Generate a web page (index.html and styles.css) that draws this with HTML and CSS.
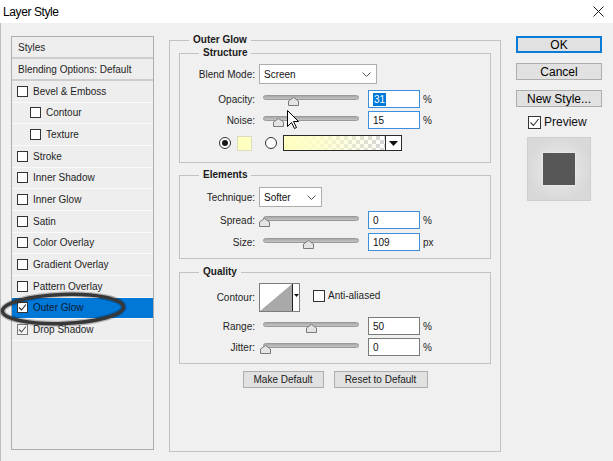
FILE: index.html
```html
<!DOCTYPE html>
<html>
<head>
<meta charset="utf-8">
<title>Layer Style</title>
<link rel="stylesheet" href="styles.css">
</head>
<body>
<div class="window">
  <div class="titlebar">
    <span class="title">Layer Style</span>
    <svg class="close" width="11" height="11" viewBox="0 0 11 11"><path d="M0.5 0.5L10.5 10.5M10.5 0.5L0.5 10.5" stroke="#1a1a1a" stroke-width="1"/></svg>
  </div>
  <div class="content">
    <div class="styles-panel">
      <div class="head-row">Styles</div>
      <div class="head-row">Blending Options: Default</div>
      <div class="row"><span class="cb"></span>Bevel &amp; Emboss</div>
      <div class="row sub"><span class="cb"></span>Contour</div>
      <div class="row sub"><span class="cb"></span>Texture</div>
      <div class="row"><span class="cb"></span>Stroke</div>
      <div class="row"><span class="cb"></span>Inner Shadow</div>
      <div class="row"><span class="cb"></span>Inner Glow</div>
      <div class="row"><span class="cb"></span>Satin</div>
      <div class="row"><span class="cb"></span>Color Overlay</div>
      <div class="row"><span class="cb"></span>Gradient Overlay</div>
      <div class="row"><span class="cb"></span>Pattern Overlay</div>
      <div class="row selected"><span class="cb"><svg width="9" height="9" viewBox="0 0 9 9"><polyline points="1,4.5 3.5,7 8,1.5" fill="none" stroke="#222" stroke-width="1.1"/></svg></span>Outer Glow</div>
      <div class="row"><span class="cb dim"><svg width="9" height="9" viewBox="0 0 9 9"><polyline points="1,4.5 3.5,7 8,1.5" fill="none" stroke="#555" stroke-width="1.1"/></svg></span>Drop Shadow</div>
    </div>

    <fieldset class="main">
      <legend class="main-legend">Outer Glow</legend>

      <fieldset class="group structure">
        <legend>Structure</legend>
        <div class="frow r-blend">
          <span class="lbl">Blend Mode:</span>
          <div class="select blend">Screen<svg width="9" height="5" viewBox="0 0 9 5"><polyline points="0.5,0.5 4.5,4.5 8.5,0.5" fill="none" stroke="#555" stroke-width="1"/></svg></div>
        </div>
        <div class="frow r-opacity">
          <span class="lbl">Opacity:</span>
          <div class="slider"><div class="track"></div><svg class="thumb" style="left:29px" width="11" height="9" viewBox="0 0 11 9"><polygon points="5.5,0.5 10.5,4 10.5,8.5 0.5,8.5 0.5,4" fill="#e4e4e4" stroke="#7a7a7a"/></svg></div>
          <div class="num focus"><span class="hl">31</span></div><span class="unit">%</span>
        </div>
        <div class="frow r-noise">
          <span class="lbl">Noise:</span>
          <div class="slider"><div class="track"></div><svg class="thumb" style="left:14px" width="11" height="9" viewBox="0 0 11 9"><polygon points="5.5,0.5 10.5,4 10.5,8.5 0.5,8.5 0.5,4" fill="#e4e4e4" stroke="#7a7a7a"/></svg></div>
          <div class="num focus">15</div><span class="unit">%</span>
        </div>
        <div class="frow r-color">
          <span class="radio on"></span>
          <span class="swatch"></span>
          <span class="radio"></span>
          <div class="gradbox"><div class="grad"></div><div class="gdrop"><svg width="9" height="5" viewBox="0 0 9 5"><polygon points="0,0 9,0 4.5,5" fill="#111"/></svg></div></div>
        </div>
      </fieldset>

      <fieldset class="group elements">
        <legend>Elements</legend>
        <div class="frow r-tech">
          <span class="lbl">Technique:</span>
          <div class="select tech">Softer<svg width="9" height="5" viewBox="0 0 9 5"><polyline points="0.5,0.5 4.5,4.5 8.5,0.5" fill="none" stroke="#555" stroke-width="1"/></svg></div>
        </div>
        <div class="frow r-s">
          <span class="lbl">Spread:</span>
          <div class="slider"><div class="track"></div><svg class="thumb" style="left:0px" width="11" height="9" viewBox="0 0 11 9"><polygon points="5.5,0.5 10.5,4 10.5,8.5 0.5,8.5 0.5,4" fill="#e4e4e4" stroke="#7a7a7a"/></svg></div>
          <div class="num focus">0</div><span class="unit">%</span>
        </div>
        <div class="frow r-s">
          <span class="lbl">Size:</span>
          <div class="slider"><div class="track"></div><svg class="thumb" style="left:44px" width="11" height="9" viewBox="0 0 11 9"><polygon points="5.5,0.5 10.5,4 10.5,8.5 0.5,8.5 0.5,4" fill="#e4e4e4" stroke="#7a7a7a"/></svg></div>
          <div class="num focus">109</div><span class="unit">px</span>
        </div>
      </fieldset>

      <fieldset class="group quality">
        <legend>Quality</legend>
        <div class="frow r-contour">
          <span class="lbl">Contour:</span>
          <div class="contour">
            <svg class="curve" width="32" height="27" viewBox="0 0 32 27"><polygon points="0,27 32,0 32,27" fill="#a9a9a9"/></svg>
            <div class="cdrop"><svg width="5" height="3" viewBox="0 0 5 3"><polygon points="0,0 5,0 2.5,3" fill="#111"/></svg></div>
          </div>
          <span class="cb aa"></span><span class="aa-text">Anti-aliased</span>
        </div>
        <div class="frow r-range">
          <span class="lbl">Range:</span>
          <div class="slider"><div class="track"></div><svg class="thumb" style="left:47px" width="11" height="9" viewBox="0 0 11 9"><polygon points="5.5,0.5 10.5,4 10.5,8.5 0.5,8.5 0.5,4" fill="#e4e4e4" stroke="#7a7a7a"/></svg></div>
          <div class="num">50</div><span class="unit">%</span>
        </div>
        <div class="frow r-jitter">
          <span class="lbl">Jitter:</span>
          <div class="slider"><div class="track"></div><svg class="thumb" style="left:1px" width="11" height="9" viewBox="0 0 11 9"><polygon points="5.5,0.5 10.5,4 10.5,8.5 0.5,8.5 0.5,4" fill="#e4e4e4" stroke="#7a7a7a"/></svg></div>
          <div class="num">0</div><span class="unit">%</span>
        </div>
      </fieldset>

      <div class="defaults">
        <div class="sbtn make">Make Default</div>
        <div class="sbtn reset">Reset to Default</div>
      </div>
    </fieldset>

    <div class="side">
      <div class="btn default">OK</div>
      <div class="btn">Cancel</div>
      <div class="btn">New Style...</div>
      <div class="preview-row"><span class="cb pv"><svg width="11" height="11" viewBox="0 0 11 11"><polyline points="1.5,5.5 4.5,8.5 9.5,2" fill="none" stroke="#333" stroke-width="1.1"/></svg></span>Preview</div>
      <div class="preview"><div class="pv-square"></div></div>
    </div>
  </div>

  <svg class="ring" width="128" height="42" viewBox="0 0 128 42">
    <g transform="rotate(-2 63 21)">
      <ellipse cx="63" cy="21" rx="60.5" ry="14.5" fill="none" stroke="rgba(0,0,0,0.22)" stroke-width="6"/>
      <ellipse cx="63" cy="21" rx="60.5" ry="14.5" fill="none" stroke="#383838" stroke-width="3.5"/>
    </g>
  </svg>
  <svg class="cursor" width="13" height="20" viewBox="0 0 13 20"><path d="M0.5,0.5 L0.5,16.5 L4.5,12.5 L7.5,18.5 L9.5,17.5 L6.5,11.5 L11.5,11.5 Z" fill="#fff" stroke="#000" stroke-width="1" stroke-linejoin="round"/></svg>
</div>
</body>
</html>
```

FILE: styles.css
```css
* { box-sizing: border-box; }
html, body { margin: 0; padding: 0; }
body {
  width: 613px;
  height: 461px;
  overflow: hidden;
  background: #f0f0f0;
  font-family: "Liberation Sans", Arial, sans-serif;
  font-size: 10px;
  color: #1e1e1e;
}
.window {
  position: relative;
  width: 613px;
  height: 461px;
  background: #f0f0f0;
}
.titlebar {
  height: 23px;
  background: #fff;
  display: flex;
  align-items: center;
  justify-content: space-between;
  padding: 0 9px 0 3px;
}
.title {
  font-size: 12px;
  letter-spacing: -0.4px;
  color: #000;
}
.content {
  display: flex;
  align-items: flex-start;
  height: 438px;
  padding: 11px 0 0 10px;
  border-left: 1px solid #bdbdbd;
}

/* left list */
.styles-panel {
  margin-top: 2px;
  width: 143px;
  height: 414px;
  border: 1px solid #adadad;
  background: #eeeeee;
  flex: none;
}
.head-row {
  height: 22px;
  padding-left: 6px;
  display: flex;
  align-items: center;
  border-bottom: 2px solid #cdcdcd;
  color: #1e1e1e;
}
.row {
  height: 21.67px;
  display: flex;
  align-items: center;
  padding-left: 5px;
  border-bottom: 1px solid #fafafa;
  color: #1e1e1e;
}
.row.sub { padding-left: 18px; }
.row.selected { background: #0078d7; color: #0c1a33; }
.cb {
  width: 11px;
  height: 11px;
  border: 1px solid #333;
  background: #fff;
  margin-right: 5px;
  display: flex;
  align-items: center;
  justify-content: center;
  flex: none;
}
.cb.dim { border-color: #777; background: #f4f4f4; }

/* main fieldset */
fieldset {
  margin: 0;
  padding: 0;
  border: 1px solid #c2c2c2;
  min-width: 0;
}
legend {
  margin-left: 19px;
  padding: 0 4px;
  font-weight: bold;
  font-size: 10px;
  line-height: 12px;
  color: #1a1a1a;
}
.main {
  margin-left: 15px;
  width: 332px;
  height: 418px;
  padding: 1px 9px 0 9px;
  flex: none;
}
.main-legend { margin-left: 10px; }
.group { padding: 0; }
.structure { padding-bottom: 11px; }
.elements { margin-top: 6px; padding-bottom: 7px; }
.quality { margin-top: 7px; padding-bottom: 7px; }

.frow {
  display: flex;
  align-items: center;
  height: 18px;
}
.r-blend { margin-top: 5px; height: 20px; }
.r-opacity { margin-top: 6px; }
.r-noise { margin-top: 3px; }
.r-color { margin-top: 6px; height: 16px; padding-left: 39px; }
.r-tech { margin-top: 6px; height: 20px; }
.r-s { margin-top: 4px; }
.r-contour { margin-top: 5px; height: 29px; }
.r-range { margin-top: 5px; }
.r-jitter { margin-top: 3px; }

.lbl {
  width: 75px;
  text-align: right;
  flex: none;
  color: #1e1e1e;
}
.select {
  margin-left: 4px;
  height: 20px;
  background: #fff;
  border: 1px solid #adadad;
  display: flex;
  align-items: center;
  justify-content: space-between;
  padding: 0 5px 0 4px;
  color: #111;
}
.select.blend { width: 118px; }
.select.tech { width: 63px; }

.slider {
  position: relative;
  margin-left: 4px;
  width: 104px;
  height: 10px;
  padding: 0 4px;
  margin-top: 1px;
  flex: none;
}
.track {
  height: 5px;
  border: 1px solid #9a9a9a;
  border-radius: 3px;
  background: linear-gradient(#a9a9a9, #c4c4c4);
}
.thumb {
  position: absolute;
  top: 2px;
}
.num {
  margin-left: 5px;
  width: 52px;
  height: 18px;
  background: #fff;
  border: 1px solid #7a7a7a;
  display: flex;
  align-items: center;
  padding-left: 4px;
  color: #111;
  flex: none;
}
.num.focus { border-color: #3c8fdc; }
.hl {
  background: #0078d7;
  color: #fff;
  line-height: 13px;
  padding: 0 1px;
}
.unit { margin-left: 3px; color: #1e1e1e; }

.radio {
  width: 12px;
  height: 12px;
  border: 1px solid #333;
  border-radius: 50%;
  background: #fff;
  display: flex;
  align-items: center;
  justify-content: center;
  flex: none;
}
.radio.on::after {
  content: "";
  width: 6px;
  height: 6px;
  border-radius: 50%;
  background: #1a1a1a;
}
.swatch {
  margin-left: 6px;
  width: 15px;
  height: 15px;
  background: #ffffc0;
  border: 1px solid #dcdcc0;
  flex: none;
}
.radio + .gradbox { margin-left: 6px; }
.swatch + .radio { margin-left: 13px; }
.gradbox {
  width: 119px;
  height: 16px;
  border: 1px solid #2a2a2a;
  display: flex;
  flex: none;
}
.grad {
  flex: 1;
  background-image:
    linear-gradient(to right, #ffffc0 0%, rgba(255, 255, 200, 0.85) 35%, rgba(255, 255, 255, 0) 100%),
    conic-gradient(#d6d6d6 90deg, #ffffff 90deg 180deg, #d6d6d6 180deg 270deg, #ffffff 270deg);
  background-size: 100% 100%, 8px 8px;
}
.gdrop {
  width: 16px;
  border-left: 1px solid #2a2a2a;
  background: #fff;
  display: flex;
  align-items: center;
  justify-content: center;
}

.contour {
  margin-left: 4px;
  width: 41px;
  height: 29px;
  border: 1px solid #7c7c7c;
  background: #fff;
  display: flex;
  flex: none;
}
.curve { display: block; }
.cdrop {
  flex: 1;
  border-left: 1px solid #222;
  display: flex;
  align-items: center;
  justify-content: center;
  padding-bottom: 4px;
}
.cb.aa {
  margin-left: 13px;
  margin-right: 3px;
  width: 12px;
  height: 12px;
  margin-top: -4px;
}
.aa-text { margin-top: -4px; color: #1e1e1e; }

.defaults {
  margin-top: 7px;
  display: flex;
  justify-content: center;
  gap: 10px;
}
.sbtn {
  height: 17px;
  border: 1px solid #adadad;
  background: #e1e1e1;
  display: flex;
  align-items: center;
  justify-content: center;
  color: #1a1a1a;
}
.sbtn.make { width: 81px; }
.sbtn.reset { width: 94px; }

/* right column */
.side {
  margin-left: 15px;
  margin-top: 2px;
  width: 86px;
  display: flex;
  flex-direction: column;
  flex: none;
}
.btn {
  height: 17px;
  border: 1px solid #adadad;
  background: #e1e1e1;
  font-size: 12px;
  display: flex;
  align-items: center;
  justify-content: center;
  color: #000;
}
.btn + .btn { margin-top: 10px; }
.btn.default { border: 2px solid #0a7bd6; }
.preview-row {
  margin-top: 8px;
  height: 14px;
  display: flex;
  align-items: center;
  padding-left: 12px;
  font-size: 12px;
  color: #111;
}
.cb.pv {
  width: 13px;
  height: 13px;
  margin-right: 3px;
}
.preview {
  margin-top: 8px;
  margin-left: 11px;
  width: 64px;
  height: 64px;
  border: 1px solid #cfcfcf;
  background: radial-gradient(circle at 50% 50%, #e8e8e8 0%, #e2e2e2 40%, #d8d8d8 75%);
  display: flex;
  align-items: center;
  justify-content: center;
}
.pv-square {
  width: 32px;
  height: 32px;
  background: #575757;
  box-shadow: 0 0 2px 1px rgba(235, 235, 235, 0.8);
}

/* overlays */
.ring {
  position: absolute;
  left: 0;
  top: 288px;
}
.cursor {
  position: absolute;
  left: 287px;
  top: 110px;
}
```
